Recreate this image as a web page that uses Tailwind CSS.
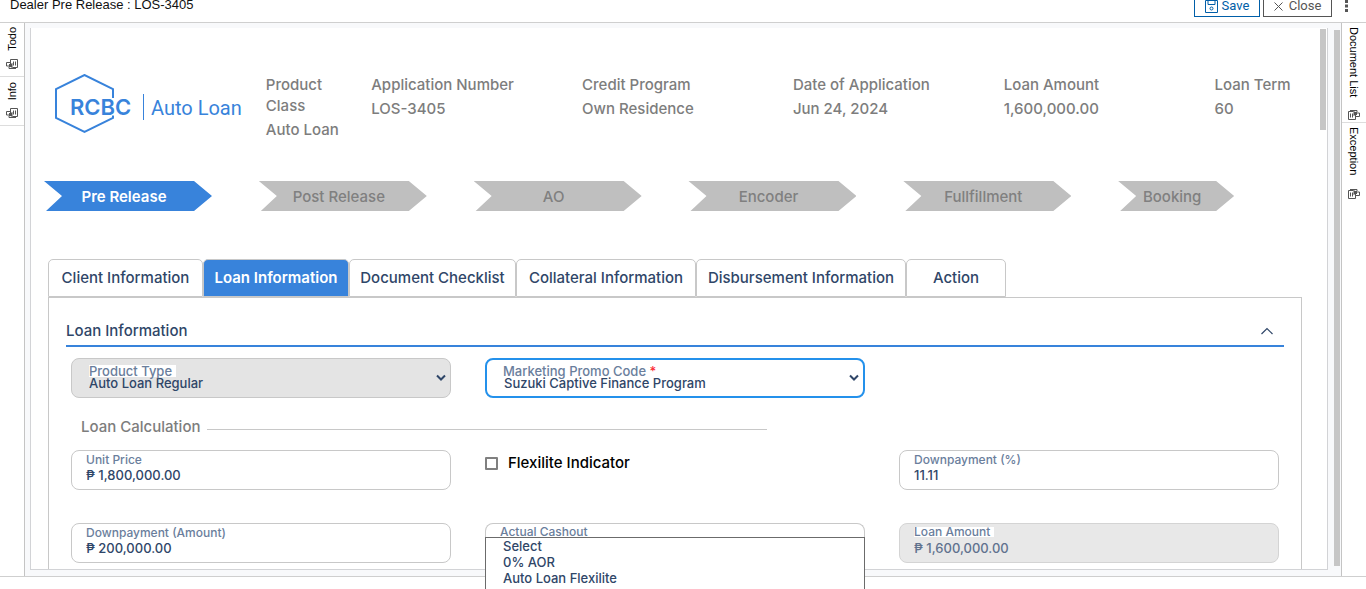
<!DOCTYPE html>
<html lang="en">
<head>
<meta charset="utf-8">
<meta name="viewport" content="width=device-width, initial-scale=1">
<title>Dealer Pre Release : LOS-3405</title>
<script src="https://cdn.jsdelivr.net/npm/@tailwindcss/browser@4"></script>
</head>
<body class="bg-white font-['Inter',sans-serif] font-medium text-[#2f4668]">
<svg class="hidden" aria-hidden="true">
  <symbol id="cards" viewBox="0 0 12 11">
    <path d="M4.500 5V.5h7v8h-5 M7.500 2.500v4 M9.500 2.500v4 M4 3.500H.5v3.500H3 M3 8v1.500h7" fill="none" stroke="#555"/>
    <path d="M3 5h1.500L6.500 4v5L4.500 8H3z" fill="#555"/>
  </symbol>
</svg>
<div class="flex h-screen flex-col overflow-hidden">
  <header class="flex h-[23px] shrink-0 items-end justify-between overflow-hidden border-b border-[#cfcfcf] pb-[5px] pl-2.5 pr-[15px] font-normal">
    <h1 class="pb-1 font-['Liberation_Sans',sans-serif] text-[13px] leading-4 text-[#111]">Dealer Pre Release : LOS-3405</h1>
    <div class="flex items-end gap-[3px] font-['Roboto',sans-serif] text-[13px]">
      <button type="button" class="flex h-[22px] w-[66px] items-center justify-center gap-1 border border-[#005ea8] text-[#005ea8]">
        <svg width="13" height="13" viewBox="0 0 13 13" fill="none" stroke="#005ea8"><path d="M.5 .5h12v12H.5z M3 .5v4h7v-4"/><circle cx="6.500" cy="8.500" r="1.500"/></svg>Save
      </button>
      <button type="button" class="flex h-[22px] w-[69px] items-center justify-center gap-1.5 border border-[#555] text-[#555]">
        <svg width="9" height="9" viewBox="0 0 9 9" stroke="#555"><path d="M.5 .5l8 8M8.500 .5l-8 8"/></svg>Close
      </button>
      <button type="button" aria-label="More" class="ml-2 self-end pb-1">
        <svg width="8" height="15" viewBox="0 0 8 15" fill="#555"><path d="M2 2h3v3H2zM2 6.500h3v3H2zM2 11h3v3H2z"/></svg>
      </button>
    </div>
  </header>

  <div class="flex min-h-0 flex-1">
    <nav class="w-[25px] shrink-0 border-r border-[#c4c4c4] font-['Liberation_Sans',sans-serif] text-[11px] font-normal leading-4 text-black">
      <a href="#todo" class="flex flex-col items-center gap-2 border-b border-[#ddd] pb-1.5 pt-1">
        <span class="rotate-180 [writing-mode:vertical-rl]">Todo</span>
        <svg width="12" height="11"><use href="#cards"/></svg>
      </a>
      <a href="#info" class="flex flex-col items-center gap-2 border-b border-[#ddd] pb-1.5 pt-[5px]">
        <span class="rotate-180 [writing-mode:vertical-rl]">Info</span>
        <svg width="12" height="11"><use href="#cards"/></svg>
      </a>
    </nav>

    <div class="flex min-w-0 flex-1 bg-[#f8f9fb] pb-1.5 pl-[5px] pt-[5px]">
      <main class="flex min-w-0 flex-1 overflow-hidden border-x border-b border-[#d2d3d6] bg-white">
        <div class="min-w-0 flex-1">
          <div class="grid grid-cols-12 pl-6 pt-[46px] text-[15px] leading-[21px] text-[#7d7d7d]">
            <div class="col-span-2">
              <svg width="190" height="60" viewBox="0 1 190 60" role="img" aria-label="RCBC Auto Loan">
                <path d="M58 25V16L29.500 2 1 16v29l28.500 14L58 45v-2.500" fill="none" stroke="#3883db" stroke-width="2"/>
                <path d="M88.500 21v26" stroke="#3883db"/>
                <text x="15" y="42" font-family="Inter" font-size="22" font-weight="600" fill="#3883db">RCBC</text>
                <text x="96" y="42" font-family="Roboto" font-size="20" font-weight="400" fill="#3883db">Auto Loan</text>
              </svg>
            </div>
            <dl><dt class="w-20">Product Class</dt><dd class="mt-[3px]">Auto Loan</dd></dl>
            <dl class="col-span-2"><dt>Application Number</dt><dd class="mt-[3px]">LOS-3405</dd></dl>
            <dl class="col-span-2"><dt>Credit Program</dt><dd class="mt-[3px]">Own Residence</dd></dl>
            <dl class="col-span-2"><dt>Date of Application</dt><dd class="mt-[3px]">Jun 24, 2024</dd></dl>
            <dl class="col-span-2"><dt>Loan Amount</dt><dd class="mt-[3px]">1,600,000.00</dd></dl>
            <dl><dt>Loan Term</dt><dd class="mt-[3px]">60</dd></dl>
          </div>

          <ol class="mt-[41px] grid grid-cols-6 text-center text-[15px] leading-[32px] text-[#808080] *:ml-[13px] *:h-[30px] *:w-42 *:bg-[#bfbfbf] *:pr-2 *:[clip-path:polygon(0_0,calc(100%-18px)_0,100%_50%,calc(100%-18px)_100%,2px_100%,18px_50%)]">
            <li class="bg-[#3883db]! font-semibold text-white">Pre Release</li>
            <li>Post Release</li>
            <li>AO</li>
            <li>Encoder</li>
            <li>Fullfillment</li>
            <li class="w-29!">Booking</li>
          </ol>

          <div role="tablist" class="ml-[17px] mt-12 flex h-[38px] text-[15px] *:rounded-t-[5px] *:border *:border-[#c8c8c8]">
            <button type="button" role="tab" class="w-[155px]">Client Information</button>
            <button type="button" role="tab" aria-selected="true" class="w-[146px] bg-[#3883db] font-semibold text-white">Loan Information</button>
            <button type="button" role="tab" class="w-[167px]">Document Checklist</button>
            <button type="button" role="tab" class="w-[180px]">Collateral Information</button>
            <button type="button" role="tab" class="w-[210px]">Disbursement Information</button>
            <button type="button" role="tab" class="w-[100px]">Action</button>
          </div>

          <section class="ml-[17px] mr-[18px] h-full border border-[#c8c8c8] px-[17px] pt-[22px]">
            <div class="flex items-center justify-between border-b-2 border-[#3883db] pb-[3px] pr-[11px]">
              <h2 class="text-[15px] leading-[22px]">Loan Information</h2>
              <button type="button" aria-label="Collapse">
                <svg width="12" height="8" viewBox="0 0 12 8" fill="none" stroke="#2f4668" stroke-width="1.200"><path d="M.5 7L6 1.500 11.500 7"/></svg>
              </button>
            </div>

            <div class="px-[5px] text-[13px]">
              <div class="mt-[11px] grid grid-cols-3 gap-x-[34px]">
                <div class="relative">
                  <label for="ptype" class="absolute left-[18px] top-[7px] bg-white pr-1 leading-3 text-[#6a7e9c]">Product Type</label>
                  <select id="ptype" class="h-10 w-full appearance-none rounded-[8px] border border-[#c8c8c8] bg-[#e4e4e4] pl-[17px] pt-3"><option>Auto Loan Regular</option></select>
                  <svg class="pointer-events-none absolute right-[5px] top-4" width="10" height="8" viewBox="0 0 10 8" fill="none" stroke="#2f4668" stroke-width="2"><path d="M1 1.500l4 4 4-4"/></svg>
                </div>
                <div class="relative">
                  <label for="promo" class="absolute left-[18px] top-[7px] bg-white pr-1 leading-3 text-[#6a7e9c]">Marketing Promo Code <span class="text-red-500">*</span></label>
                  <select id="promo" class="h-10 w-full appearance-none rounded-[8px] border-2 border-[#2491eb] bg-white pl-[17px] pt-3"><option>Suzuki Captive Finance Program</option></select>
                  <svg class="pointer-events-none absolute right-1.5 top-4" width="10" height="8" viewBox="0 0 10 8" fill="none" stroke="#2f4668" stroke-width="2"><path d="M1 1.500l4 4 4-4"/></svg>
                </div>
              </div>

              <div class="mt-[18px] flex items-center gap-[7px] pl-2.5 text-[15px] leading-[22px] text-[#7d7d7d]">
                <h3>Loan Calculation</h3>
                <div class="mt-1 h-px w-140 bg-[#c8c8c8]"></div>
              </div>

              <div class="mt-3 grid grid-cols-3 gap-x-[34px] gap-y-[33px]">
                <div class="relative">
                  <label for="price" class="absolute left-[15px] top-1 text-[12px] leading-3 text-[#6a7e9c]">Unit Price</label>
                  <input id="price" value="₱ 1,800,000.00" class="h-10 w-full rounded-[8px] border border-[#c8c8c8] pl-3.5 pt-[9px]">
                </div>
                <div class="flex h-[26px] items-center gap-2.5">
                  <input id="flex" type="checkbox" class="size-[13px] appearance-none rounded-[1px] border-2 border-[#808080] bg-white checked:bg-[#3883db]">
                  <label for="flex" class="text-[15px] text-black">Flexilite Indicator</label>
                </div>
                <div class="relative">
                  <label for="dpp" class="absolute left-[15px] top-1 text-[12px] leading-3 text-[#6a7e9c]">Downpayment (%)</label>
                  <input id="dpp" value="11.11" class="h-10 w-full rounded-[8px] border border-[#c8c8c8] pl-3.5 pt-[9px]">
                </div>
                <div class="relative">
                  <label for="dpa" class="absolute left-[15px] top-1 text-[12px] leading-3 text-[#6a7e9c]">Downpayment (Amount)</label>
                  <input id="dpa" value="₱ 200,000.00" class="h-10 w-full rounded-[8px] border border-[#c8c8c8] pl-3.5 pt-[9px]">
                </div>
                <div class="rounded-t-[8px] border-x border-t border-[#c8c8c8]">
                  <p class="pl-3.5 pt-[3px] text-[12px] leading-[10px] text-[#6a7e9c]">Actual Cashout</p>
                  <ul role="listbox" aria-label="Marketing Promo Code" class="fixed -ml-px w-95 border border-[#6b6b6b] bg-white pl-[17px] leading-4">
                    <li role="option">Select</li>
                    <li role="option">0% AOR</li>
                    <li role="option">Auto Loan Flexilite</li>
                    <li class="h-4"></li>
                  </ul>
                </div>
                <div class="relative">
                  <label for="amt" class="absolute left-[15px] top-1 bg-white pr-1 text-[12px] leading-[10px] text-[#6a7e9c]">Loan Amount</label>
                  <input id="amt" readonly value="₱ 1,600,000.00" class="h-10 w-full rounded-[8px] border border-[#d4d4d4] bg-[#e8e8e8] pl-3.5 pt-[9px] text-[#61728e]">
                </div>
              </div>
            </div>
          </section>
        </div>
        <div class="w-[7px] shrink-0 pr-px pt-px"><div class="h-[101px] bg-[#c6c6c6]"></div></div>
      </main>
      <div class="ml-1.5 mr-px w-1.5 shrink-0 pb-1 pt-0.5"><div class="h-full bg-[#c6c6c6]"></div></div>
    </div>

    <nav class="w-[25px] shrink-0 border-l border-[#c4c4c4] font-['Liberation_Sans',sans-serif] text-[11px] font-normal leading-4 text-black">
      <a href="#documents" class="flex flex-col items-center gap-3 border-b border-[#ddd] pb-0.5 pt-1">
        <span class="[writing-mode:vertical-rl]">Document List</span>
        <svg class="rotate-180" width="12" height="11"><use href="#cards"/></svg>
      </a>
      <a href="#exception" class="flex flex-col items-center gap-3 pt-1">
        <span class="[writing-mode:vertical-rl]">Exception</span>
        <svg class="rotate-180" width="12" height="11"><use href="#cards"/></svg>
      </a>
    </nav>
  </div>
  <footer class="h-[13px] shrink-0 border-t border-[#cfcfcf]"></footer>
</div>
</body>
</html>
